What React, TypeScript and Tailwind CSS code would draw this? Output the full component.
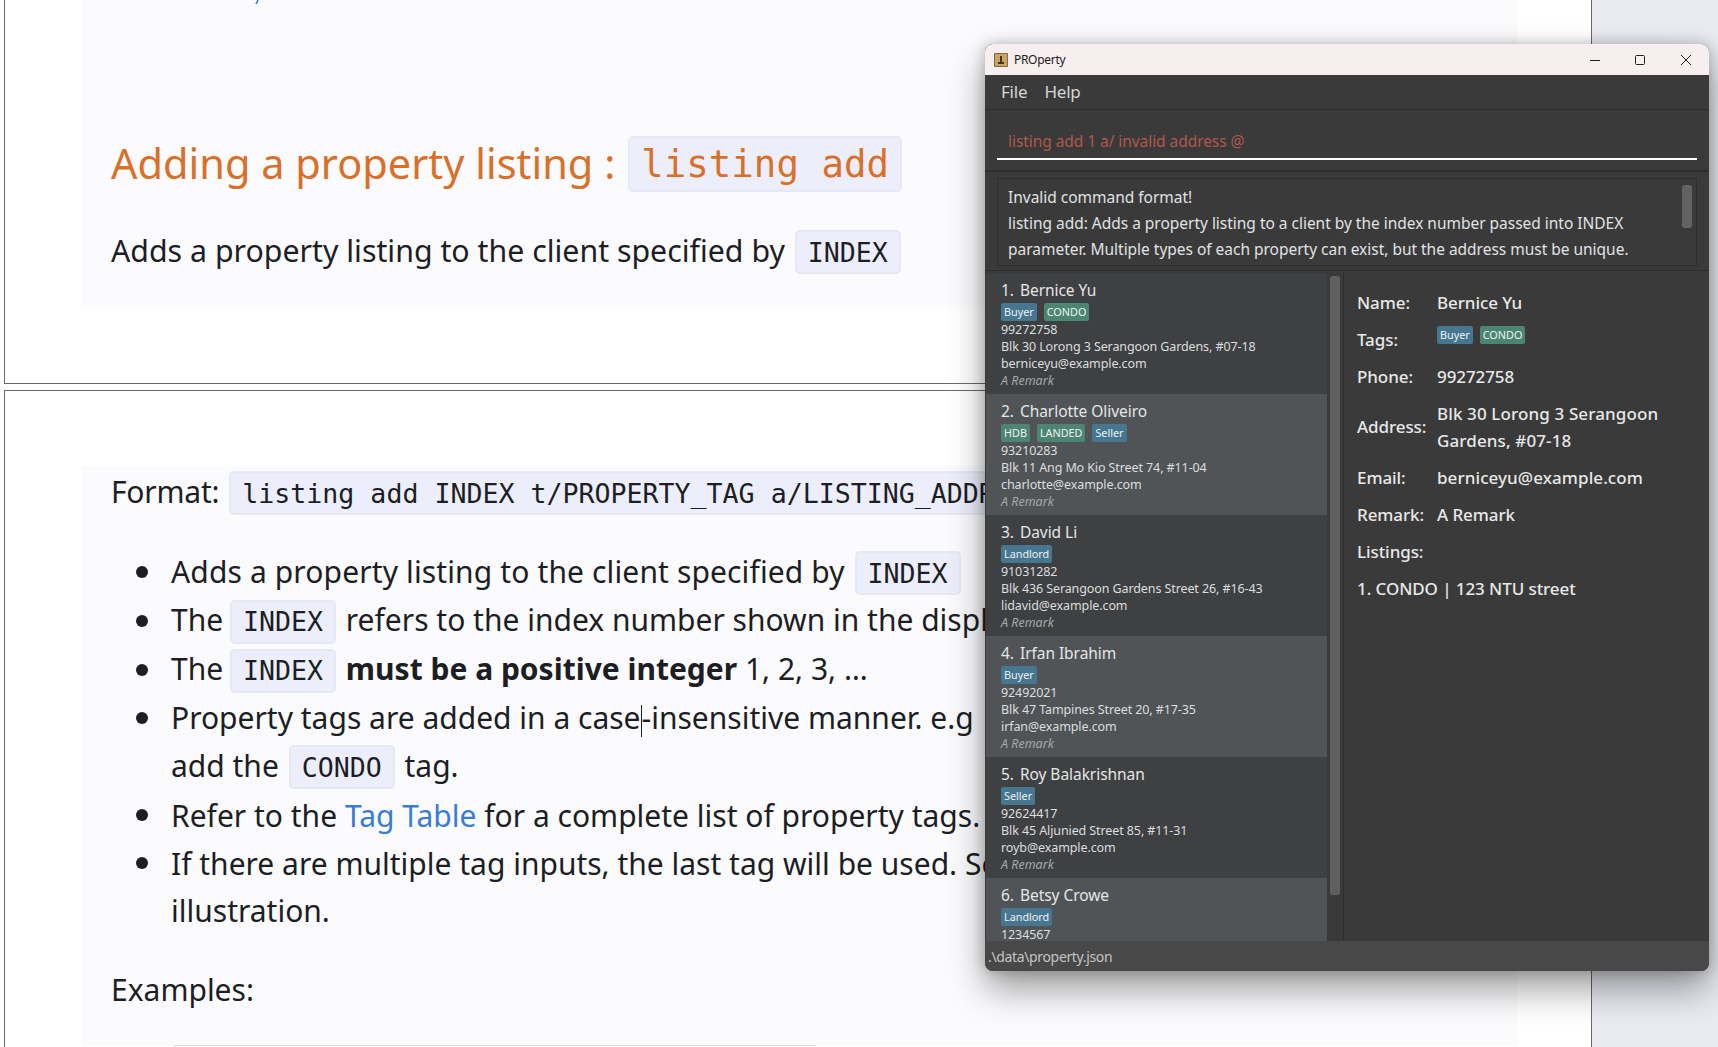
const sans = "font-['Noto_Sans',sans-serif]"

function Code({ children }: { children: React.ReactNode }) {
  return (
    <code className="mx-[2px] inline-flex h-[44px] items-center rounded-[5px] border-2 border-[#e6e8f2] bg-[#eceefb] px-[11px] font-['DejaVu_Sans_Mono',monospace] text-[26.6px] tracking-normal text-[#1c1e24]">
      {children}
    </code>
  )
}

function Tag({ label, kind }: { label: string; kind: "role" | "type" }) {
  return (
    <span
      className={`flex h-[18px] items-center rounded-[2px] px-[3px] text-[10.8px] text-[#eef2f2] ${
        kind === "role" ? "bg-[#467690]" : "bg-[#4d8573]"
      }`}
    >
      {label}
    </span>
  )
}

const clients = [
  {
    index: "1.",
    name: "Bernice Yu",
    tags: [{ label: "Buyer", kind: "role" }, { label: "CONDO", kind: "type" }],
    phone: "99272758",
    address: "Blk 30 Lorong 3 Serangoon Gardens, #07-18",
    email: "berniceyu@example.com",
  },
  {
    index: "2.",
    name: "Charlotte Oliveiro",
    tags: [{ label: "HDB", kind: "type" }, { label: "LANDED", kind: "type" }, { label: "Seller", kind: "role" }],
    phone: "93210283",
    address: "Blk 11 Ang Mo Kio Street 74, #11-04",
    email: "charlotte@example.com",
  },
  {
    index: "3.",
    name: "David Li",
    tags: [{ label: "Landlord", kind: "role" }],
    phone: "91031282",
    address: "Blk 436 Serangoon Gardens Street 26, #16-43",
    email: "lidavid@example.com",
  },
  {
    index: "4.",
    name: "Irfan Ibrahim",
    tags: [{ label: "Buyer", kind: "role" }],
    phone: "92492021",
    address: "Blk 47 Tampines Street 20, #17-35",
    email: "irfan@example.com",
  },
  {
    index: "5.",
    name: "Roy Balakrishnan",
    tags: [{ label: "Seller", kind: "role" }],
    phone: "92624417",
    address: "Blk 45 Aljunied Street 85, #11-31",
    email: "royb@example.com",
  },
  {
    index: "6.",
    name: "Betsy Crowe",
    tags: [{ label: "Landlord", kind: "role" }],
    phone: "1234567",
    address: "",
    email: "",
  },
] as const

function ClientCard({ client, odd }: { client: (typeof clients)[number]; odd: boolean }) {
  return (
    <div className={`h-[121px] shrink-0 pl-[15px] pt-[6px] ${odd ? "bg-[#515457]" : "bg-[#3f4042]"}`}>
      <div className="flex h-[22px] gap-[6px] text-[15.5px] leading-[22px] tracking-[-0.05px] text-[#e4e6e6]">
        <span>{client.index}</span>
        <span>{client.name}</span>
      </div>
      <div className="mt-[2px] flex h-[18px] gap-[7px]">
        {client.tags.map((t) => (
          <Tag key={t.label} label={t.label} kind={t.kind} />
        ))}
      </div>
      <div className="text-[12.5px] leading-[17px] tracking-[-0.1px] text-[#dcdedf]">
        <div className="h-[17px]">{client.phone}</div>
        {client.address && <div>{client.address}</div>}
        {client.email && <div>{client.email}</div>}
        {client.address && <div className="italic tracking-normal text-[#a4a8ab]">A Remark</div>}
      </div>
    </div>
  )
}

function DetailRow({ label, h, children }: { label: string; h: string; children?: React.ReactNode }) {
  return (
    <div className={`flex items-center ${h}`}>
      <div className="w-[80px] shrink-0">{label}</div>
      <div>{children}</div>
    </div>
  )
}

function PropertyWindow() {
  return (
    <div className={`absolute left-[985px] top-[44px] flex h-[927px] w-[724px] flex-col overflow-hidden rounded-[8px] bg-[#3a3a3a] shadow-[0_18px_36px_rgba(0,0,0,0.38),0_0_14px_rgba(0,0,0,0.22)] ${sans}`}>
      {/* title bar */}
      <div className="flex h-[31px] shrink-0 items-center bg-[#f7eeef] pl-[9px] text-[#1c1c1c]">
        <svg width="14" height="14" viewBox="0 0 14 14">
          <rect width="14" height="14" rx="1" fill="#8d6a3a" />
          <rect x="1" y="1" width="12" height="12" fill="#c9a468" />
          <path d="M6 3h2v6h2v2H4V9h2z" fill="#4a3418" />
        </svg>
        <span className="ml-[6px] text-[12px] tracking-[-0.3px]">PROperty</span>
        <svg className="ml-auto mr-[4px]" width="105" height="14" viewBox="0 0 105 14" fill="none" stroke="#222" strokeWidth="1">
          <path d="M1 7.5h10" />
          <rect x="46.5" y="2.5" width="9" height="9" rx="1" />
          <path d="M92 2l10 10M102 2L92 12" />
        </svg>
        <span className="w-[11px]" />
      </div>

      {/* menu */}
      <div className="flex h-[35px] shrink-0 items-center gap-[17px] border-b border-[#2e2e2e] pl-[16px] text-[17px] tracking-[-0.2px] text-[#d6d6d6]">
        <span>File</span>
        <span>Help</span>
      </div>

      {/* command box */}
      <div className="h-[62px] shrink-0 border-b-2 border-[#2e2e2e] px-[12px] pt-[19px]">
        <div className="h-[31px] border-b-2 border-white pl-[11px] text-[15.5px] leading-[24px] tracking-[-0.06px] text-[#b0584a]">
          listing add 1 a/ invalid address @
        </div>
      </div>

      {/* result display */}
      <div className="h-[99px] shrink-0 border-b border-[#2e2e2e] px-[12px] pt-[6px]">
        <div className="flex h-[88px] border border-[#2e2e2e] pl-[10px] pt-[5px] text-[15.5px] leading-[26px] tracking-[-0.02px] text-[#e0e2e4]">
          <div className="w-[674px] whitespace-nowrap">
            <div>Invalid command format!</div>
            <div>listing add: Adds a property listing to a client by the index number passed into INDEX</div>
            <div>parameter. Multiple types of each property can exist, but the address must be unique.</div>
          </div>
          <div className="mt-[1px] h-[43px] w-[10px] rounded-[3px] bg-[#626262]" />
        </div>
      </div>

      {/* list and details */}
      <div className="flex min-h-0 flex-1">
        <div className="flex w-[359px] shrink-0 border-r border-[#2e2e2e] pl-px">
          <div className="flex w-[342px] flex-col overflow-hidden pt-[2px]">
            {clients.map((c, i) => (
              <ClientCard key={c.name} client={c} odd={i % 2 === 1} />
            ))}
          </div>
          <div className="w-[16px] pl-[3px] pt-[5px]">
            <div className="h-[619px] w-[10px] rounded-[3px] bg-[#5f5f5f]" />
          </div>
        </div>
        <div className="flex-1 pl-[13px] pt-[13px] text-[17px] font-medium tracking-[-0.08px] text-[#e8e8e8]">
          <DetailRow label="Name:" h="h-[37px]">Bernice Yu</DetailRow>
          <DetailRow label="Tags:" h="h-[37px]">
            <div className="-mt-[9px] flex gap-[7px] font-normal tracking-normal">
              <Tag label="Buyer" kind="role" />
              <Tag label="CONDO" kind="type" />
            </div>
          </DetailRow>
          <DetailRow label="Phone:" h="h-[37px]">99272758</DetailRow>
          <DetailRow label="Address:" h="h-[64px]">
            <div className="leading-[27px] tracking-[0.12px]">
              Blk 30 Lorong 3 Serangoon
              <br />
              Gardens, #07-18
            </div>
          </DetailRow>
          <DetailRow label="Email:" h="h-[37px]">
            <span className="tracking-[0.08px]">berniceyu@example.com</span>
          </DetailRow>
          <DetailRow label="Remark:" h="h-[37px]">A Remark</DetailRow>
          <DetailRow label="Listings:" h="h-[37px]" />
          <div className="flex h-[37px] items-center">1. CONDO | 123 NTU street</div>
        </div>
      </div>

      {/* status bar */}
      <div className="flex h-[30px] shrink-0 items-center bg-[#484848] pl-[3px] text-[14px] tracking-[-0.35px] text-[#c4c4c4]">
        .\data\property.json
      </div>
    </div>
  )
}

function Bullet({ h, plain, children }: { h: string; plain?: boolean; children: React.ReactNode }) {
  return (
    <li className={`flex items-center ${h}`}>
      <span className="mr-[26px] flex w-[6px] justify-center">
        {!plain && <span className="h-[12px] w-[12px] shrink-0 rounded-full bg-[#1c1e24]" />}
      </span>
      <span>{children}</span>
    </li>
  )
}

export default function App() {
  return (
    <div className={`relative h-[1047px] w-[1718px] overflow-hidden bg-[#e9ebf1] ${sans} text-[#1c1e24]`}>
      <div className="h-full w-[1592px] border-r border-[#6a6a6a] bg-white pl-[4px]">
        {/* upper page */}
        <section className="h-[384px] border-b border-l border-[#6a6a6a]">
          <div className="ml-[76px] h-[307px] w-[1436px] bg-[#fbfbfd] pl-[30px]">
            <svg className="ml-[141px]" width="8" height="4" viewBox="0 0 8 4">
              <path d="M4 4L6 0" stroke="#2f7ad6" strokeWidth="1.5" />
            </svg>
            <h2 className="mt-[132px] flex h-[56px] items-center whitespace-nowrap text-[41.5px] text-[#d9702a]">
              <span className="-mt-[2px]">Adding a property listing :</span>
              <code className="ml-[13px] inline-flex h-[56px] items-center rounded-[5px] border-2 border-[#e6e8f2] bg-[#eceefb] px-[11px] font-['DejaVu_Sans_Mono',monospace] text-[37.4px] text-[#d9702a]">
                listing add
              </code>
            </h2>
            <p className="mt-[37px] flex h-[44px] items-center whitespace-pre text-[30.3px]">
              <span>
                Adds a property listing to the client specified by <Code>INDEX</Code>
              </span>
            </p>
          </div>
        </section>

        {/* lower page */}
        <section className="mt-[6px] h-[657px] border-l border-t border-[#6a6a6a] pt-[76px]">
          <div className="ml-[76px] h-full w-[1436px] bg-[#fbfbfd] pl-[30px] text-[30px]">
            <p className="-mt-px flex h-[48px] items-center whitespace-pre pt-[4px]">
              <span>
                <span className="tracking-[-0.2px]">Format:</span> <Code>listing add INDEX t/PROPERTY_TAG a/LISTING_ADDRESS</Code>
              </span>
            </p>
            <ul className="mt-[34px] list-none whitespace-pre pl-[28px]">
              <Bullet h="h-[48px]">
                <span className="tracking-[0.13px]">Adds a property listing to the client specified by</span> <Code>INDEX</Code>
              </Bullet>
              <Bullet h="h-[49px]">
                <span className="-mr-[3px]">The</span> <Code>INDEX</Code> refers to the index number shown in the displayed list.
              </Bullet>
              <Bullet h="h-[49px]">
                <span className="-mr-[3px]">The</span> <Code>INDEX</Code> <strong className="font-bold">must be a positive integer</strong> 1, 2, 3, …
              </Bullet>
              <Bullet h="h-[47px]">
                Property tags are added in a case
                <span className="inline-block h-[32px] w-px bg-[#1c1e24] align-middle" />
                -insensitive manner. e.g
              </Bullet>
              <Bullet h="h-[50px]" plain>
                add the <Code>CONDO</Code> tag.
              </Bullet>
              <Bullet h="h-[48px]">
                Refer to the <a className="text-[#3a7bd5]">Tag Table</a> for a complete list of property tags.
              </Bullet>
              <Bullet h="h-[48px]">If there are multiple tag inputs, the last tag will be used. See the</Bullet>
              <Bullet h="h-[47px]" plain>
                illustration.
              </Bullet>
            </ul>
            <p className="mt-[31px] flex h-[48px] items-center">Examples:</p>
            <div className="ml-[63px] mt-[32px] h-px w-[642px] bg-[#dcdcdc]" />
          </div>
        </section>
      </div>

      <PropertyWindow />
    </div>
  )
}
